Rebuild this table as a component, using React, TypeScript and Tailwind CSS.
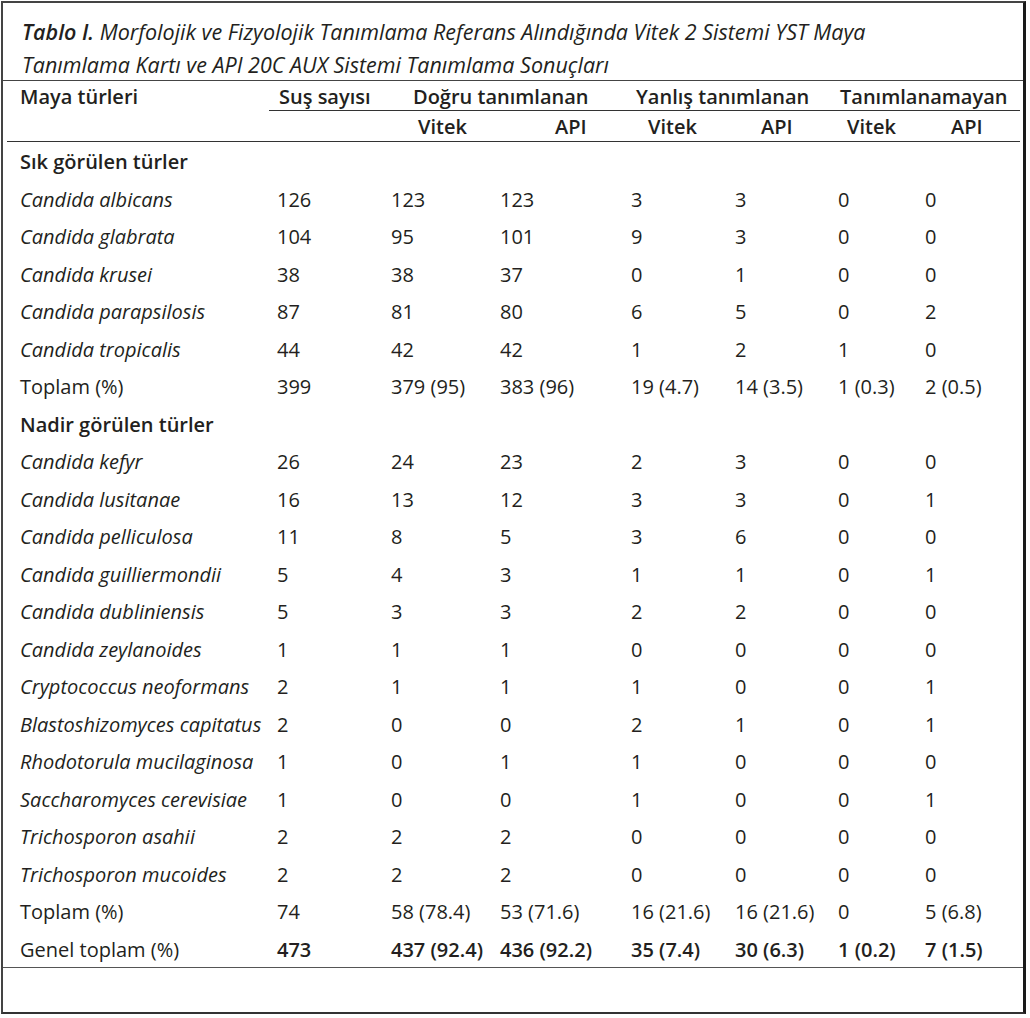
import {FC} from 'react';

type Row =
  | {kind: 'section'; label: string}
  | {kind: 'data'; label: string; italic?: boolean; bold?: boolean; values: string[]};

const rows: Row[] = [
  {kind: 'section', label: 'Sık görülen türler'},
  {kind: 'data', label: 'Candida albicans', italic: true, values: ['126', '123', '123', '3', '3', '0', '0']},
  {kind: 'data', label: 'Candida glabrata', italic: true, values: ['104', '95', '101', '9', '3', '0', '0']},
  {kind: 'data', label: 'Candida krusei', italic: true, values: ['38', '38', '37', '0', '1', '0', '0']},
  {kind: 'data', label: 'Candida parapsilosis', italic: true, values: ['87', '81', '80', '6', '5', '0', '2']},
  {kind: 'data', label: 'Candida tropicalis', italic: true, values: ['44', '42', '42', '1', '2', '1', '0']},
  {kind: 'data', label: 'Toplam (%)', values: ['399', '379 (95)', '383 (96)', '19 (4.7)', '14 (3.5)', '1 (0.3)', '2 (0.5)']},
  {kind: 'section', label: 'Nadir görülen türler'},
  {kind: 'data', label: 'Candida kefyr', italic: true, values: ['26', '24', '23', '2', '3', '0', '0']},
  {kind: 'data', label: 'Candida lusitanae', italic: true, values: ['16', '13', '12', '3', '3', '0', '1']},
  {kind: 'data', label: 'Candida pelliculosa', italic: true, values: ['11', '8', '5', '3', '6', '0', '0']},
  {kind: 'data', label: 'Candida guilliermondii', italic: true, values: ['5', '4', '3', '1', '1', '0', '1']},
  {kind: 'data', label: 'Candida dubliniensis', italic: true, values: ['5', '3', '3', '2', '2', '0', '0']},
  {kind: 'data', label: 'Candida zeylanoides', italic: true, values: ['1', '1', '1', '0', '0', '0', '0']},
  {kind: 'data', label: 'Cryptococcus neoformans', italic: true, values: ['2', '1', '1', '1', '0', '0', '1']},
  {kind: 'data', label: 'Blastoshizomyces capitatus', italic: true, values: ['2', '0', '0', '2', '1', '0', '1']},
  {kind: 'data', label: 'Rhodotorula mucilaginosa', italic: true, values: ['1', '0', '1', '1', '0', '0', '0']},
  {kind: 'data', label: 'Saccharomyces cerevisiae', italic: true, values: ['1', '0', '0', '1', '0', '0', '1']},
  {kind: 'data', label: 'Trichosporon asahii', italic: true, values: ['2', '2', '2', '0', '0', '0', '0']},
  {kind: 'data', label: 'Trichosporon mucoides', italic: true, values: ['2', '2', '2', '0', '0', '0', '0']},
  {kind: 'data', label: 'Toplam (%)', values: ['74', '58 (78.4)', '53 (71.6)', '16 (21.6)', '16 (21.6)', '0', '5 (6.8)']},
  {kind: 'data', label: 'Genel toplam (%)', bold: true, values: ['473', '437 (92.4)', '436 (92.2)', '35 (7.4)', '30 (6.3)', '1 (0.2)', '7 (1.5)']},
];

// column starts: 20, 277, 391, 500, 631, 735, 838, 925
const gridCols = 'grid grid-cols-[257px_114px_109px_131px_104px_103px_87px_1fr]';

const TableRow: FC<{row: Row}> = ({row}) => {
  if (row.kind === 'section') {
    return (
      <div className={`${gridCols} h-[37.5px] items-center pl-[13px] pt-[3px]`}>
        <div className="col-span-8 font-semibold whitespace-nowrap">{row.label}</div>
      </div>
    );
  }
  return (
    <div className={`${gridCols} h-[37.5px] items-center pl-[13px] pt-[3px]`}>
      <div className={`whitespace-nowrap ${row.italic ? 'italic' : ''}`}>{row.label}</div>
      {row.values.map((v, i) => (
        <div className={`whitespace-nowrap ${row.bold ? 'font-semibold' : ''}`} key={i}>
          {v}
        </div>
      ))}
    </div>
  );
};

export default function App() {
  return (
    <div className="bg-white w-[1030px] h-[1018px] pt-px pl-px text-[#231f20] font-['Open_Sans',sans-serif] text-[20px] leading-none">
      <div className="w-[1025px] h-[1013px] border-2 border-[#444] border-b-[#333] border-r-[3px] border-r-[#1a1a1a] flex flex-col">
        <div className="h-[78px] pl-[19px] pt-[12px] text-[21.5px] leading-[33px] italic border-b-[1.5px] border-[#444] whitespace-nowrap">
          <span className="font-semibold">Tablo I.</span> Morfolojik ve Fizyolojik Tanımlama Referans Alındığında Vitek 2 Sistemi YST Maya
          <br />
          Tanımlama Kartı ve API 20C AUX Sistemi Tanımlama Sonuçları
        </div>

        <div className="ml-[4px] mr-[3px] flex flex-col">
          <div className="flex h-[30px] font-semibold">
            <div className="w-[262px] pl-[13px] pt-[6px] whitespace-nowrap">Maya türleri</div>
            <div className="flex-1 flex border-b-[1.5px] border-[#333] pt-[6px] whitespace-nowrap">
              <div className="w-[122px] pl-[10px]">Suş sayısı</div>
              <div className="w-[240px] pl-[22px]">Doğru tanımlanan</div>
              <div className="w-[207px] pl-[5px]">Yanlış tanımlanan</div>
              <div className="flex-1 pl-[2px]">Tanımlanamayan</div>
            </div>
          </div>
          <div className={`${gridCols} h-[31px] items-center pl-[13px] pt-[2px] font-semibold border-b-[1.5px] border-[#333]`}>
            <div />
            <div />
            <div className="pl-[27px]">Vitek</div>
            <div className="pl-[55px]">API</div>
            <div className="pl-[17px]">Vitek</div>
            <div className="pl-[26px]">API</div>
            <div className="pl-[9px]">Vitek</div>
            <div className="pl-[26px]">API</div>
          </div>
        </div>

        <div className="ml-[4px] mr-[3px] flex flex-col">
          {rows.map((row, i) => (
            <TableRow key={i} row={row} />
          ))}
        </div>

        <div className="border-t-[1.5px] border-[#555] flex-1" />
      </div>
    </div>
  );
}
